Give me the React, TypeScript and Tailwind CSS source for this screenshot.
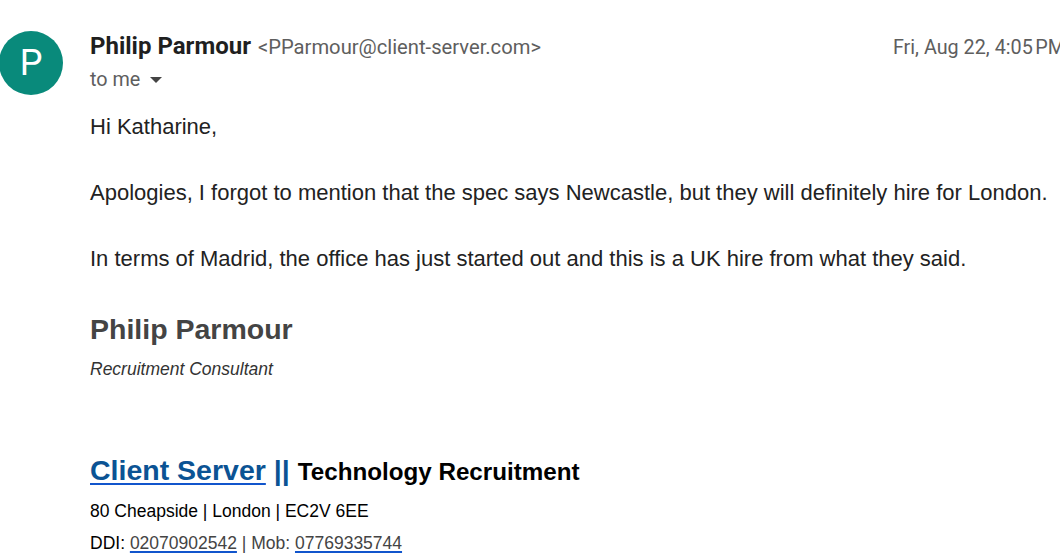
import React from 'react';

const Avatar: React.FC = () => (
  <div className="w-[64px] h-[64px] shrink-0 rounded-full bg-[#098a7b] text-white flex items-center justify-center text-[36px] leading-none font-['Roboto',sans-serif] -ml-[1px] mt-[31px]">
    P
  </div>
);

const App: React.FC = () => {
  return (
    <div className="w-[1060px] h-[555px] overflow-hidden bg-white">
      <div className="flex">
        <Avatar />

        <div className="ml-[27px] w-[975px] shrink-0">
          {/* header */}
          <div className="flex justify-between items-baseline pt-[28px] font-['Roboto',sans-serif]">
            <div className="flex items-baseline gap-[7px]">
              <span className="text-[24px] font-bold text-[#1f1f1f]">Philip Parmour</span>
              <span className="text-[20.2px] text-[#5e5e5e]">&lt;PParmour@client-server.com&gt;</span>
            </div>
            <span className="text-[19.8px] text-[#5e5e5e]">Fri, Aug 22, 4:05&#8239;PM</span>
          </div>
          <div className="flex items-center gap-[10px] text-[19.8px] text-[#5e5e5e] font-['Roboto',sans-serif] mt-[1px]">
            <span>to me</span>
            <svg width="12" height="8" viewBox="0 0 12 8" className="mt-[1px]">
              <path d="M0 1h12L6 7z" fill="#444" />
            </svg>
          </div>

          {/* body */}
          <div className="mt-[21px] font-['Liberation_Sans',Arial,sans-serif] text-[22px] leading-[22px] text-[#222]">
            <p>Hi Katharine,</p>
            <p className="mt-[44px]">
              Apologies, I forgot to mention that the spec says Newcastle, but they will definitely hire for London.
            </p>
            <p className="mt-[44px]">
              In terms of Madrid, the office has just started out and this is a UK hire from what they said.
            </p>
          </div>

          {/* signature */}
          <div className="font-['Liberation_Sans',Arial,sans-serif]">
            <div className="mt-[43px] text-[28.5px] font-bold text-[#444] leading-[32px]">Philip Parmour</div>
            <div className="mt-[14px] text-[17.5px] italic text-[#333] leading-[20px]">Recruitment Consultant</div>

            <div className="mt-[75px] flex items-baseline gap-[8px] leading-[32px]">
              <span className="text-[28.5px] font-bold text-[#0b5394] underline decoration-[#1155cc] decoration-2 underline-offset-[3px]">
                Client Server
              </span>
              <span className="text-[28.5px] font-bold text-[#0b5394]">||</span>
              <span className="text-[24.2px] font-bold text-black">Technology Recruitment</span>
            </div>
            <div className="mt-[12px] text-[17.5px] text-black leading-[22px]">80 Cheapside | London | EC2V 6EE</div>
            <div className="mt-[10px] text-[17.5px] text-[#444] leading-[22px]">
              <span className="text-black">DDI: </span>
              <span className="underline decoration-[#1155cc] decoration-2 underline-offset-[2px]">02070902542</span>
              <span> | Mob: </span>
              <span className="underline decoration-[#1155cc] decoration-2 underline-offset-[2px]">07769335744</span>
            </div>
          </div>
        </div>
      </div>
    </div>
  );
};

export default App;
